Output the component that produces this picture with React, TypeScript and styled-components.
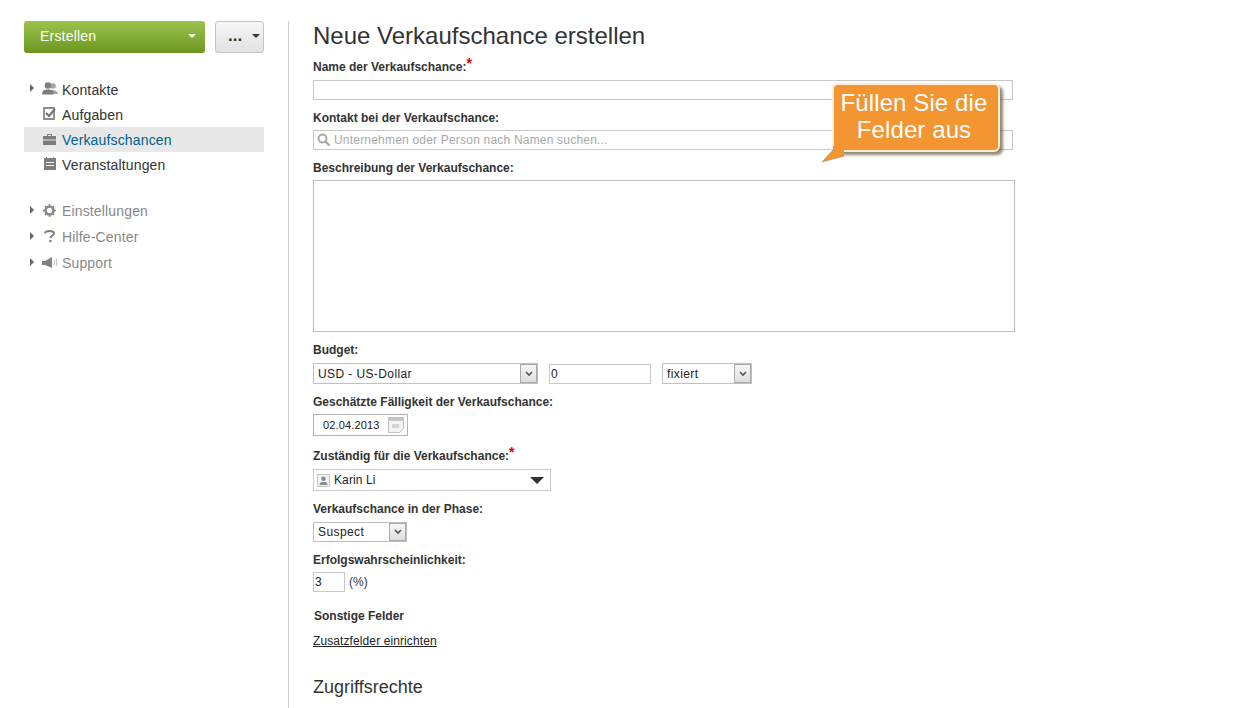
import React from 'react';
import styled, { createGlobalStyle } from 'styled-components';

const Global = createGlobalStyle`
  html, body { margin: 0; padding: 0; background: #fff; overflow: hidden; }
  body { font-family: "Liberation Sans", Arial, sans-serif; color: #333; }
`;

const Page = styled.div`
  display: flex;
  width: 1240px;
  height: 708px;
  overflow: hidden;
  padding-top: 21px;
  box-sizing: border-box;
`;

const Sidebar = styled.aside`
  width: 240px;
  margin-left: 24px;
  margin-right: 24px;
  flex: none;
`;

const Actions = styled.div`
  display: flex;
  gap: 10px;
  margin-bottom: 24px;
`;

const CreateButton = styled.div`
  width: 181px;
  height: 32px;
  box-sizing: border-box;
  padding: 0 9px 2px 16px;
  display: flex;
  align-items: center;
  justify-content: space-between;
  border-radius: 3px;
  background: linear-gradient(#9bc44f, #6b971f);
  color: #fff;
  font-size: 14px;
  letter-spacing: 0.2px;
`;

const Caret = styled.span<{ $color: string }>`
  width: 0;
  height: 0;
  border-left: 4px solid transparent;
  border-right: 4px solid transparent;
  border-top: 4px solid ${p => p.$color};
`;

const MoreButton = styled.div`
  width: 49px;
  height: 32px;
  box-sizing: border-box;
  padding: 0 3px 0 12px;
  display: flex;
  justify-content: space-between;
  border: 1px solid #c4c4c4;
  border-radius: 3px;
  background: linear-gradient(#f6f6f6, #e2e2e2);
  color: #333;
  font-size: 17px;
  font-weight: bold;
  line-height: 28px;
  ${Caret} { margin-top: 12px; }
`;

const NavList = styled.nav<{ $height: number; $muted?: boolean }>`
  display: grid;
  grid-auto-rows: ${p => p.$height}px;
  margin-bottom: ${p => (p.$muted ? 0 : 21)}px;
  color: ${p => (p.$muted ? '#888' : '#333')};
`;

const NavItem = styled.div<{ $active?: boolean }>`
  display: grid;
  grid-template-columns: 7px 25px 1fr;
  align-items: center;
  padding-left: 6px;
  font-size: 14px;
  letter-spacing: 0.15px;
  background: ${p => (p.$active ? '#e8e8e8' : 'transparent')};
  color: ${p => (p.$active ? '#00608f' : 'inherit')};
  svg { display: block; justify-self: center; margin-top: -2px; }
`;

const Arrow = styled.span`
  width: 0;
  height: 0;
  margin-top: -3px;
  border-top: 4px solid transparent;
  border-bottom: 4px solid transparent;
  border-left: 4px solid #666;
`;

const Main = styled.main`
  flex: none;
  width: 927px;
  border-left: 1px solid #ccc;
  padding-left: 24px;
  box-sizing: border-box;
  position: relative;
`;

const Title = styled.h1`
  margin: 0;
  font-size: 24px;
  font-weight: normal;
  line-height: 30px;
  color: #333;
`;

const Label = styled.label<{ $top: number; $bottom: number; $left?: number }>`
  display: block;
  margin: ${p => p.$top}px 0 ${p => p.$bottom}px ${p => p.$left ?? 0}px;
  height: 14px;
  font-size: 12px;
  line-height: 16px;
  font-weight: bold;
  color: #333;
  white-space: nowrap;
`;

const Star = styled.sup`
  color: #d40000;
  font-size: 14px;
  line-height: 0;
  vertical-align: 3px;
`;

const TextField = styled.input<{ $width: number; $height?: number }>`
  display: block;
  width: ${p => p.$width}px;
  height: ${p => p.$height ?? 20}px;
  box-sizing: border-box;
  border: 1px solid #c8c8c8;
  padding: 0 1px;
  margin: 0;
  outline: none;
  font: 12px "Liberation Sans", Arial, sans-serif;
  color: #222;
  background: #fff;
`;

const SearchField = styled.div`
  display: flex;
  align-items: center;
  gap: 3px;
  width: 700px;
  height: 20px;
  box-sizing: border-box;
  border: 1px solid #c8c8c8;
  padding-left: 3px;
  font-size: 12px;
  color: #a8a8a8;
  letter-spacing: 0.2px;
`;

const TextArea = styled.textarea`
  display: block;
  width: 702px;
  height: 152px;
  box-sizing: border-box;
  border: 1px solid #c0c0c0;
  margin: 0;
  padding: 3px;
  resize: none;
  outline: none;
`;

const Row = styled.div`
  display: flex;
  align-items: center;
  gap: 11px;
`;

const SelectBox = styled.div<{ $width: number; $height: number }>`
  width: ${p => p.$width}px;
  height: ${p => p.$height}px;
  box-sizing: border-box;
  border: 1px solid #c0c0c0;
  display: flex;
  align-items: center;
  justify-content: space-between;
  padding-left: 4px;
  font-size: 12px;
  color: #222;
  letter-spacing: 0.4px;
`;

const SelectArrow = styled.span`
  width: 17px;
  align-self: stretch;
  box-sizing: border-box;
  background: linear-gradient(#f6f6f6, #dedede);
  border: 1px solid #a8a8a8;
  display: flex;
  align-items: center;
  justify-content: center;
`;

const DateField = styled.div`
  width: 95px;
  height: 22px;
  box-sizing: border-box;
  border: 1px solid #b4b4b4;
  display: flex;
  align-items: center;
  justify-content: space-between;
  padding: 0 3px 0 9px;
  font-size: 11px;
  letter-spacing: 0.15px;
  color: #222;
`;

const UserSelect = styled.div`
  width: 238px;
  height: 22px;
  box-sizing: border-box;
  border: 1px solid #c8c8c8;
  display: flex;
  align-items: center;
  gap: 4px;
  padding: 0 6px 0 3px;
  font-size: 12px;
  letter-spacing: 0.1px;
  color: #222;
`;

const UserArrow = styled.span`
  margin-left: auto;
  width: 0;
  height: 0;
  border-left: 7px solid transparent;
  border-right: 7px solid transparent;
  border-top: 7px solid #333;
`;

const Percent = styled.span`
  font-size: 12px;
  color: #333;
`;

const PercentRow = styled(Row)`
  gap: 4px;
`;

const SetupLink = styled.a`
  display: block;
  margin-top: 12px;
  font-size: 12px;
  line-height: 14px;
  letter-spacing: 0.1px;
  color: #222;
  text-decoration: underline;
`;

const SubTitle = styled.h2`
  margin: 28px 0 0;
  font-size: 18px;
  font-weight: normal;
  line-height: 22px;
  color: #333;
`;

const Callout = styled.div`
  position: absolute;
  left: 543px;
  top: 62px;
  width: 168px;
  height: 69px;
  box-sizing: border-box;
  border: 2px solid #fdeeda;
  border-radius: 6px;
  background: #f39530;
  box-shadow: 3px 3px 3px rgba(90, 70, 40, 0.65);
  color: #fff;
  font-size: 24px;
  line-height: 27px;
  letter-spacing: 0.1px;
  text-align: center;
  padding: 4px 4px 0 0;
`;

const CalloutTail = styled.svg`
  position: absolute;
  left: -13px;
  bottom: -14px;
`;

const Chevron = () => (
  <svg width="8" height="6" viewBox="0 0 8 6">
    <path d="M1 1l3 3 3-3" fill="none" stroke="#555" strokeWidth="1.6" />
  </svg>
);

const Select = ({ width, height, value }: { width: number; height: number; value: string }) => (
  <SelectBox $width={width} $height={height}>
    {value}
    <SelectArrow><Chevron /></SelectArrow>
  </SelectBox>
);

const PeopleIcon = () => (
  <svg width="16" height="13" viewBox="0 0 16 13" fill="#7d7d7d">
    <circle cx="11" cy="4" r="2.8" fill="#a5a5a5" />
    <path d="M8 12c0-3 1-4 3-4s4.500 1 5 4z" fill="#a5a5a5" />
    <circle cx="6" cy="3.500" r="3.300" />
    <path d="M0 12.500c0-4 2-5 6-5s5.500 1 5.500 5z" />
  </svg>
);

const TaskIcon = () => (
  <svg width="13" height="13" viewBox="0 0 13 13">
    <path d="M1 1h10v11H1z" fill="none" stroke="#8a8a8a" strokeWidth="1.800" />
    <path d="M3 6l3 3 6-7" fill="none" stroke="#6e6e6e" strokeWidth="2" />
  </svg>
);

const CaseIcon = () => (
  <svg width="13" height="12" viewBox="0 0 13 12" fill="#7d7d7d">
    <path d="M4 3V1h5v2H8V2H5v1z" />
    <path d="M0 3h13v3.500H0zM0 7.500h13V12H0z" />
  </svg>
);

const CalendarIcon = () => (
  <svg width="12" height="13" viewBox="0 0 12 13" fill="#7d7d7d">
    <path d="M0 1h2V0h1v1h6V0h1v1h2v12H0z" />
    <path d="M2 5h8v1H2zM2 8h8v1H2z" fill="#fff" />
  </svg>
);

const GearIcon = () => (
  <svg width="13" height="13" viewBox="0 0 13 13">
    <circle cx="6.500" cy="6.500" r="4" fill="none" stroke="#8a8a8a" strokeWidth="2.600" />
    <path d="M6.500 0v13M0 6.500h13M2 2l9 9M11 2l-9 9" stroke="#8a8a8a" strokeWidth="1.600" strokeDasharray="2 9 2" />
  </svg>
);

const HelpIcon = () => (
  <svg width="11" height="13" viewBox="0 0 11 13">
    <path d="M1 3.500C1 1.500 3 1 5.500 1S10 1.800 10 3.500c0 2-3.500 2-3.500 4.500" fill="none" stroke="#808080" strokeWidth="2" />
    <path d="M5.300 10h2.200v2.200H5.300z" fill="#808080" />
  </svg>
);

const SpeakerIcon = () => (
  <svg width="16" height="11" viewBox="0 0 16 11">
    <path d="M0 4h3l7-4v11L3 8H0z" fill="#808080" />
    <path d="M12 3c.8 1.500.8 3.500 0 5M14 2c1.200 2 1.200 5 0 7" fill="none" stroke="#b5b5b5" />
  </svg>
);

const SearchIcon = () => (
  <svg width="14" height="14" viewBox="0 0 14 14">
    <circle cx="5.500" cy="5.500" r="4" fill="none" stroke="#a8a8a8" strokeWidth="2" />
    <path d="M8.500 8.500l4 4" stroke="#a8a8a8" strokeWidth="2.400" />
  </svg>
);

const DateIcon = () => (
  <svg width="16" height="16" viewBox="0 0 16 16">
    <path d="M.5.500h15v11l-4 4H.5z" fill="#f3f3f3" stroke="#c0c0c0" />
    <path d="M1 1h14v3H1z" fill="#c8c8c8" />
    <path d="M4 7h7v4H4z" fill="#d4d4d4" />
  </svg>
);

const UserIcon = () => (
  <svg width="13" height="13" viewBox="0 0 13 13">
    <path d="M.5.500h12v12H.5z" fill="#f2f2f2" stroke="#c4c4c4" />
    <circle cx="6.500" cy="4.800" r="2.300" fill="#8c8c8c" />
    <path d="M2.500 11c0-2.500 1.500-3.300 4-3.300s4 .8 4 3.300z" fill="#8c8c8c" />
  </svg>
);

export default function App() {
  return (
    <Page>
      <Global />
      <Sidebar>
        <Actions>
          <CreateButton>Erstellen<Caret $color="#fff" /></CreateButton>
          <MoreButton>...<Caret $color="#333" /></MoreButton>
        </Actions>
        <NavList $height={25}>
          <NavItem><Arrow /><PeopleIcon />Kontakte</NavItem>
          <NavItem><span /><TaskIcon />Aufgaben</NavItem>
          <NavItem $active><span /><CaseIcon />Verkaufschancen</NavItem>
          <NavItem><span /><CalendarIcon />Veranstaltungen</NavItem>
        </NavList>
        <NavList $height={26} $muted>
          <NavItem><Arrow /><GearIcon />Einstellungen</NavItem>
          <NavItem><Arrow /><HelpIcon />Hilfe-Center</NavItem>
          <NavItem><Arrow /><SpeakerIcon />Support</NavItem>
        </NavList>
      </Sidebar>
      <Main>
        <Title>Neue Verkaufschance erstellen</Title>
        <Label $top={8} $bottom={7}>Name der Verkaufschance:<Star>*</Star></Label>
        <TextField $width={700} />
        <Label $top={10} $bottom={6}>Kontakt bei der Verkaufschance:</Label>
        <SearchField><SearchIcon />Unternehmen oder Person nach Namen suchen...</SearchField>
        <Label $top={10} $bottom={6}>Beschreibung der Verkaufschance:</Label>
        <TextArea />
        <Label $top={10} $bottom={7}>Budget:</Label>
        <Row>
          <Select width={225} height={21} value="USD - US-Dollar" />
          <TextField $width={102} defaultValue="0" />
          <Select width={90} height={21} value="fixiert" />
        </Row>
        <Label $top={10} $bottom={6}>Geschätzte Fälligkeit der Verkaufschance:</Label>
        <DateField>02.04.2013<DateIcon /></DateField>
        <Label $top={12} $bottom={7}>Zuständig für die Verkaufschance:<Star>*</Star></Label>
        <UserSelect><UserIcon />Karin Li<UserArrow /></UserSelect>
        <Label $top={10} $bottom={7}>Verkaufschance in der Phase:</Label>
        <Select width={94} height={20} value="Suspect" />
        <Label $top={10} $bottom={6}>Erfolgswahrscheinlichkeit:</Label>
        <PercentRow><TextField $width={32} defaultValue="3" /><Percent>(%)</Percent></PercentRow>
        <Label $top={16} $bottom={0} $left={1}>Sonstige Felder</Label>
        <SetupLink>Zusatzfelder einrichten</SetupLink>
        <SubTitle>Zugriffsrechte</SubTitle>
        <Callout>
          Füllen Sie die Felder aus
          <CalloutTail width="24" height="18" viewBox="0 0 24 18">
            <path d="M12 0v4L1 16l22-6V0z" fill="#f39530" />
            <path d="M12 4L1 16l22-6" fill="none" stroke="#8a7a60" strokeOpacity=".5" />
          </CalloutTail>
        </Callout>
      </Main>
    </Page>
  );
}
